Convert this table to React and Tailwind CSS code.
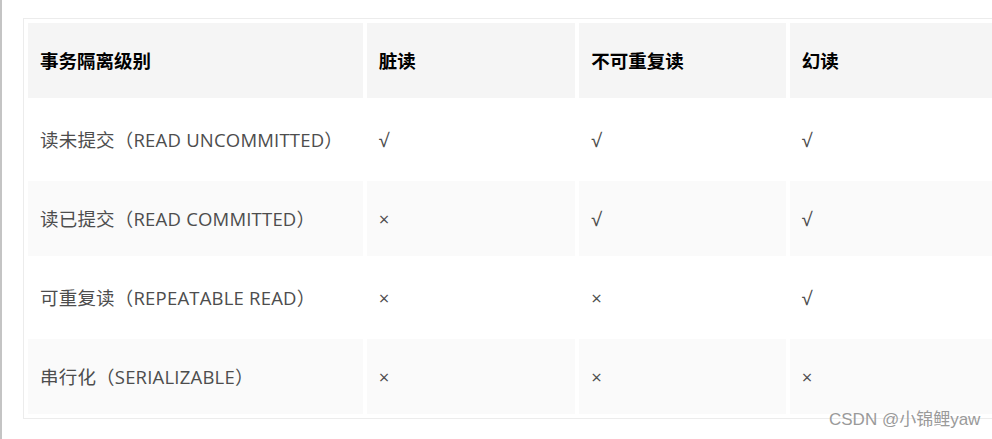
const header = ['事务隔离级别', '脏读', '不可重复读', '幻读'];

const rows = [
  ['读未提交（READ UNCOMMITTED）', '√', '√', '√'],
  ['读已提交（READ COMMITTED）', '×', '√', '√'],
  ['可重复读（REPEATABLE READ）', '×', '×', '√'],
  ['串行化（SERIALIZABLE）', '×', '×', '×'],
];

const widths = ['w-[336px]', 'w-[210px]', 'w-[208px]', 'w-[230px]'];

function App() {
  return (
    <div
      className="relative w-[992px] h-[439px] overflow-hidden bg-white border-l-2 border-[#c4c4c4]"
      style={{ fontFamily: '"Open Sans", "Noto Sans CJK SC", sans-serif' }}
    >
      <div className="ml-[21px] mt-[18px] w-[1000px] border border-[#ececec]">
        <table className="border-separate border-spacing-1 table-fixed">
          <thead>
            <tr>
              {header.map((h, i) => (
                <th
                  key={h}
                  className={`${widths[i]} h-[75px] bg-[#f5f5f5] px-3 text-left text-[18.5px] font-bold text-black`}
                >
                  {h}
                </th>
              ))}
            </tr>
          </thead>
          <tbody>
            {rows.map((row, r) => (
              <tr key={r}>
                {row.map((cell, c) => (
                  <td
                    key={c}
                    className={`h-[75px] px-3 text-left text-[18.5px] tracking-[0.2px] text-[#4d4d4d] ${r % 2 === 1 ? 'bg-[#fafafa]' : 'bg-white'}`}
                  >
                    {cell}
                  </td>
                ))}
              </tr>
            ))}
          </tbody>
        </table>
      </div>

      {/* watermark */}
      <div
        className="absolute left-[827px] top-[407px] text-[17px] text-[#9a9a9a] whitespace-nowrap"
        style={{ fontFamily: '"Liberation Sans", "Noto Sans CJK SC", sans-serif' }}
      >
        CSDN @小锦鲤yaw
      </div>
    </div>
  );
}

export default App;
